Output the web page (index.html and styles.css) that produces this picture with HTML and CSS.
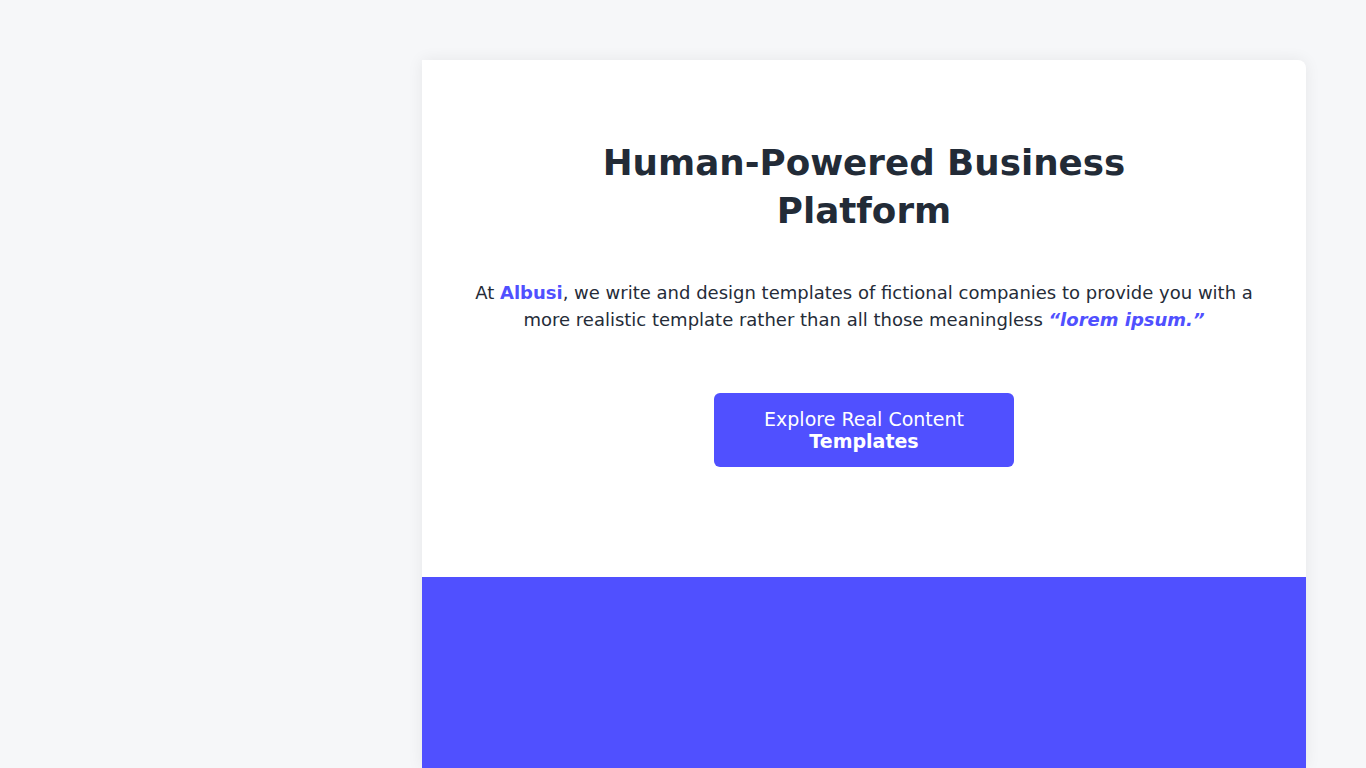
FILE: index.html
```html
<!DOCTYPE html>
<html>
<head>
<meta charset="utf-8">
<link rel="stylesheet" href="styles.css">
</head>
<body>
<div class="page">
  <aside class="side"></aside>
  <main class="card">
    <section class="hero">
      <h1 class="title">Human-Powered Business Platform</h1>
      <p class="lead">At <strong class="brand">Albusi</strong>, we write and design templates of fictional companies to provide you with a more realistic template rather than all those meaningless <em class="quote">“lorem ipsum.”</em></p>
      <a class="btn" href="#">Explore Real Content <strong>Templates</strong></a>
    </section>
    <section class="band"></section>
  </main>
</div>
</body>
</html>
```
FILE: styles.css
```css
* { box-sizing: border-box; }
html, body { margin: 0; padding: 0; }
body {
  background: #f6f7f9;
  font-family: "DejaVu Sans", sans-serif;
  color: #1f2937;
  height: 768px;
  overflow: hidden;
}
.page {
  display: flex;
  padding: 60px 60px 0 0;
}
.side { width: 422px; flex: none; }
.card {
  flex: 1;
  background: #fff;
  border-radius: 0 8px 0 0;
  box-shadow: 0 0 16px rgba(0,0,0,0.07);
  overflow: hidden;
}
.hero {
  display: flex;
  flex-direction: column;
  align-items: center;
  text-align: center;
  padding: 79px 48px 0;
  height: 517px;
}
.title {
  margin: 0;
  font-size: 35.7px;
  line-height: 48px;
  font-weight: 700;
  color: #222b37;
  max-width: 560px;
}
.lead {
  margin: 44px 0 0;
  font-size: 18px;
  line-height: 27px;
  color: #252c38;
}
.brand { color: #5050ff; font-weight: 700; }
.quote { color: #5050ff; font-weight: 700; font-style: italic; }
.btn {
  margin-top: 60px;
  width: 300px;
  padding: 15px 20px;
  background: #5050ff;
  color: #fff;
  border-radius: 6px;
  font-size: 19px;
  line-height: 22px;
  text-decoration: none;
}
.btn strong { display: block; font-weight: 700; }
.band {
  background: #5050ff;
  height: 191px;
}
```
